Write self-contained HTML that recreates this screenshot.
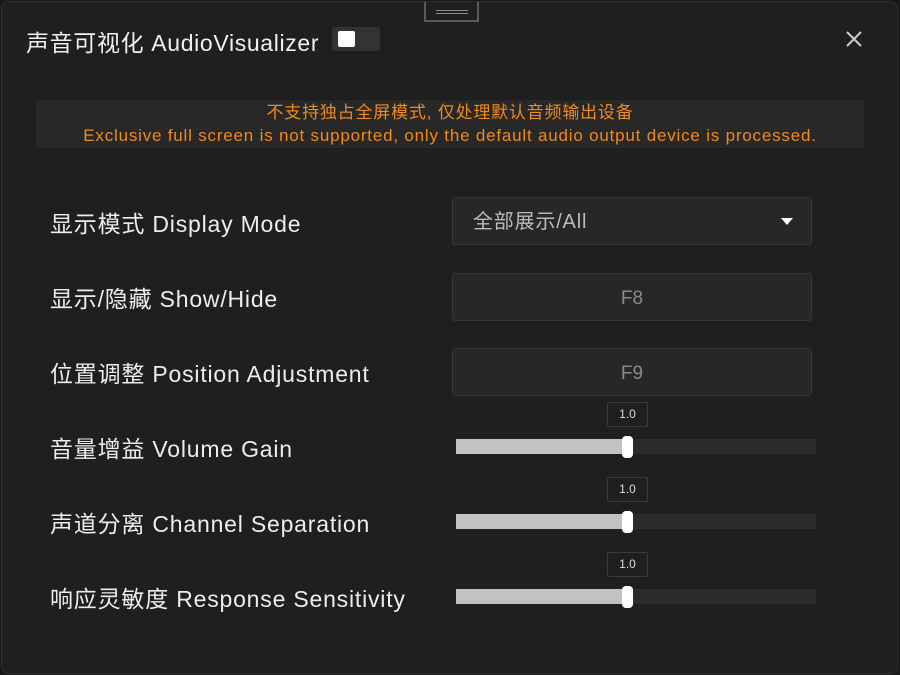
<!DOCTYPE html>
<html><head><meta charset="utf-8"><style>
*{margin:0;padding:0;box-sizing:border-box}
body{width:900px;height:675px;background:#1a1a1a;overflow:hidden;font-family:"Liberation Sans","Noto Sans CJK SC",sans-serif;position:relative}
.win{position:absolute;left:1px;top:1px;width:897px;height:673px;background:#1f1f1f;border:1px solid #2e2e2e;border-radius:8px}
.grip{position:absolute;left:422px;top:0;width:55px;height:20px;border:2px solid #5a5a5a;border-top:none;background:#1f1f1f}
.grip:before,.grip:after{content:"";position:absolute;left:10px;width:32px;height:1px;background:#888}
.grip:before{top:8px}.grip:after{top:11px}
.title{position:absolute;left:26px;top:24px;font-size:23px;color:#f0f0f0;letter-spacing:0.65px}
.tog{position:absolute;left:332px;top:27px;width:48px;height:24px;background:#333;border-radius:3px}
.tog i{position:absolute;left:6px;top:4px;width:17px;height:16px;background:#fff;border-radius:2px}
.x{position:absolute;left:843px;top:28px;width:22px;height:22px}
.ban{position:absolute;left:36px;top:100px;width:828px;height:48px;background:#282828;color:#f08a1c;text-align:center;font-size:17px;letter-spacing:0.8px;line-height:23px;padding-top:1px}
.lab{position:absolute;left:50px;font-size:23px;color:#ededed;letter-spacing:0.8px}
.box{position:absolute;left:452px;width:360px;height:48px;background:#272727;border:1px solid #363636;border-radius:3px;color:#8a8a8a;font-size:19px;line-height:49px;text-align:center}
.sel{text-align:left;padding-left:20px;color:#bbb;font-size:20px;letter-spacing:0.8px}
.sel:after{content:"";position:absolute;right:18px;top:20px;border-left:6px solid transparent;border-right:6px solid transparent;border-top:7px solid #fff}
.tr{position:absolute;left:456px;width:360px;height:15px;background:#2b2b2b}
.tr b{position:absolute;left:0;top:0;width:170px;height:15px;background:#c2c2c2}
.th{position:absolute;left:622px;width:11px;height:22px;background:#fff;border-radius:4px}
.tip{position:absolute;left:607px;width:41px;height:25px;border:1px solid #3a3a3a;border-radius:2px;background:#1f1f1f;color:#ddd;font-size:12px;line-height:23px;text-align:center}
</style></head><body>
<div class="win">
<div class="grip"></div>
</div>
<div class="title">声音可视化 AudioVisualizer</div>
<div class="tog"><i></i></div>
<svg class="x" viewBox="0 0 22 22"><path d="M4 4L18 18M18 4L4 18" stroke="#ccc" stroke-width="2"/></svg>
<div class="ban">不支持独占全屏模式, 仅处理默认音频输出设备<br>Exclusive full screen is not supported, only the default audio output device is processed.</div>
<div class="lab" style="top:205px">显示模式 Display Mode</div>
<div class="box sel" style="top:197px">全部展示/All</div>
<div class="lab" style="top:280px">显示/隐藏 Show/Hide</div>
<div class="box" style="top:273px">F8</div>
<div class="lab" style="top:355px">位置调整 Position Adjustment</div>
<div class="box" style="top:348px">F9</div>
<div class="lab" style="top:430px">音量增益 Volume Gain</div>
<div class="tip" style="top:402px">1.0</div>
<div class="tr" style="top:439px"><b></b></div><div class="th" style="top:436px"></div>
<div class="lab" style="top:505px">声道分离 Channel Separation</div>
<div class="tip" style="top:477px">1.0</div>
<div class="tr" style="top:514px"><b></b></div><div class="th" style="top:511px"></div>
<div class="lab" style="top:580px">响应灵敏度 Response Sensitivity</div>
<div class="tip" style="top:552px">1.0</div>
<div class="tr" style="top:589px"><b></b></div><div class="th" style="top:586px"></div>
</body></html>
